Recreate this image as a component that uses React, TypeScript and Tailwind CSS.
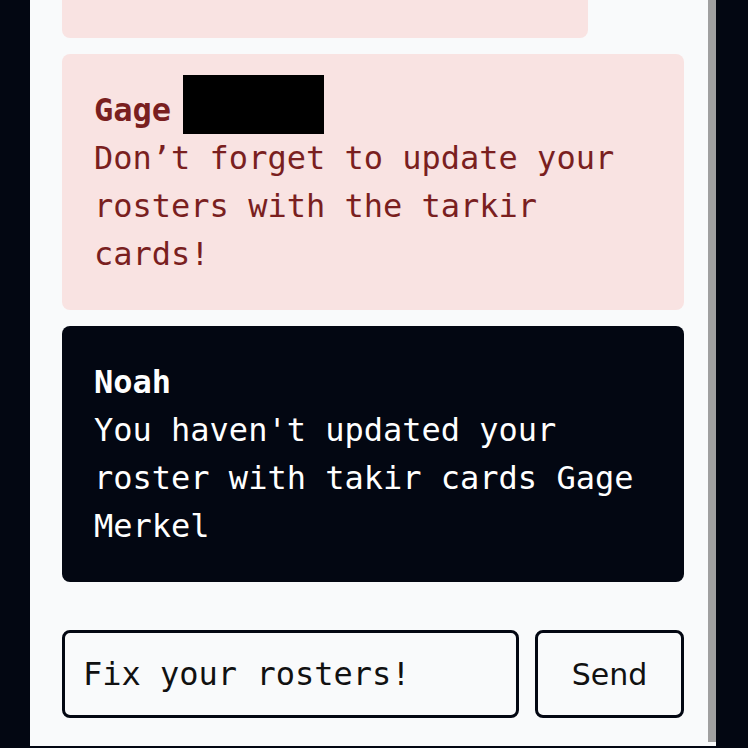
import React from "react";

export default function App() {
  const mono = { fontFamily: '"DejaVu Sans Mono", "Liberation Mono", monospace' };
  return (
    <div
      className="h-[748px] w-[748px] bg-[#030712] overflow-hidden flex flex-col justify-end pb-[2px]"
      style={mono}
    >
      <div className="relative ml-[30px] w-[686px] bg-[#f9fafb] px-8 pb-[28px] flex flex-col">
        <div className="absolute right-0 top-0 bottom-[4px] w-2 bg-[#a0a0a0]" />
        <div className="flex flex-col gap-4">
          <div className="w-[526px] h-[200px] rounded-lg bg-[#f9e3e2]" />
          <div className="relative rounded-lg bg-[#f9e3e2] p-8 text-[32px] leading-[48px] text-[#7a1f1f]">
            <div className="font-bold">Gage</div>
            <div className="absolute left-[121px] top-[21px] w-[141px] h-[59px] bg-black" />
            <div>Don’t forget to update your rosters with the tarkir cards!</div>
          </div>
          <div className="rounded-lg bg-[#030712] p-8 text-[32px] leading-[48px] text-white">
            <div className="font-bold">Noah</div>
            <div>You haven't updated your roster with takir cards Gage Merkel</div>
          </div>
        </div>
        <div className="mt-12 flex gap-4">
          <input
            className="h-[88px] flex-1 min-w-0 rounded-lg border-[3px] border-[#030712] bg-transparent pl-[18px] pr-4 text-[32px] text-[#111111] outline-none"
            style={mono}
            defaultValue="Fix your rosters!"
          />
          <button
            className="h-[88px] w-[149px] rounded-lg border-[3px] border-[#030712] bg-transparent text-[30px] text-[#111111]"
            style={{ fontFamily: '"DejaVu Sans", sans-serif' }}
          >
            Send
          </button>
        </div>
      </div>
    </div>
  );
}
